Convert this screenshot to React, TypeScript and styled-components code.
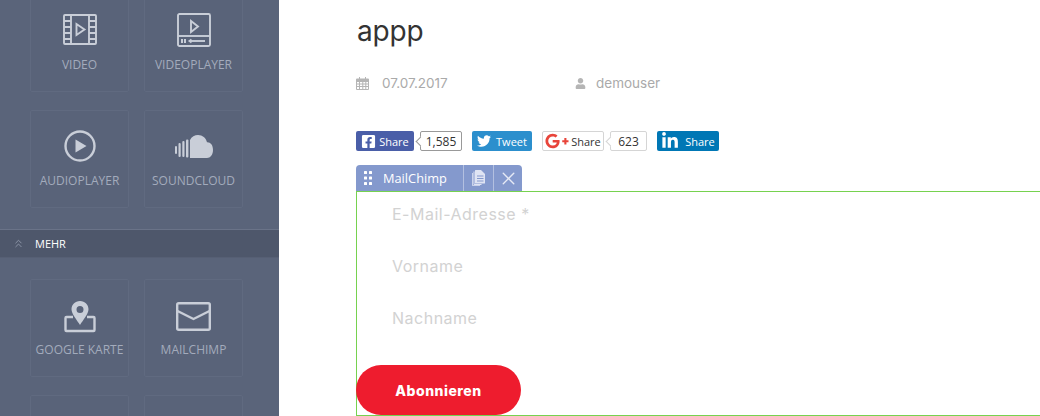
import React from 'react';
import styled, { createGlobalStyle } from 'styled-components';
import { FaFacebookSquare, FaTwitter, FaGooglePlusG, FaLinkedinIn, FaUser } from 'react-icons/fa';
import { X, ChevronsUp } from 'lucide-react';

const Global = createGlobalStyle`
  html, body { margin: 0; padding: 0; background: #fff; overflow: hidden; }
  * { box-sizing: border-box; }
`;

const Page = styled.div`
  width: 1040px;
  height: 416px;
  display: flex;
  overflow: hidden;
  font-family: "Open Sans", sans-serif;
`;

const Sidebar = styled.aside`
  width: 279px;
  flex: none;
  background: #5a647a;
  overflow: hidden;
`;

const TileGrid = styled.div<{ $top: number }>`
  display: grid;
  grid-template-columns: 99px 99px;
  column-gap: 15px;
  row-gap: 18px;
  padding-left: 30px;
  margin-top: ${p => p.$top}px;
`;

const Tile = styled.div`
  height: 98px;
  border: 1px solid #606a80;
  border-radius: 2px;
  background: #596379;
  display: flex;
  flex-direction: column;
  align-items: center;
  padding-top: 17px;
  color: #c9ced8;
`;

const IconSlot = styled.div<{ $nudge?: number }>`
  height: 36px;
  padding-top: ${p => p.$nudge ?? 0}px;
  display: flex;
  align-items: center;
  justify-content: center;
`;

const TileLabel = styled.div`
  margin-top: 9px;
  font-size: 12px;
  line-height: 16px;
  color: #a3abbc;
  white-space: nowrap;
`;

const Band = styled.div`
  height: 29px;
  margin-top: 21px;
  background: #4e576b;
  border-top: 1px solid #6a7388;
  border-bottom: 1px solid #565f74;
  display: flex;
  align-items: center;
  padding-left: 12px;
  gap: 10px;
  color: #98a0b2;
  font-size: 11px;
`;

const BandLabel = styled.span`
  color: #fff;
`;

const Main = styled.main`
  flex: 1;
  min-width: 0;
  padding-left: 77px;
  font-family: Inter, sans-serif;
`;

const Title = styled.h1`
  margin: 11px 0 0;
  padding-left: 1px;
  height: 40px;
  font-size: 28px;
  line-height: 40px;
  font-weight: 400;
  color: #333;
  letter-spacing: -0.2px;
`;

const Meta = styled.div`
  display: flex;
  margin-top: 22px;
  height: 20px;
  align-items: center;
  color: #aaa;
  font-size: 13.5px;
`;

const MetaItem = styled.div<{ $width: number; $gap: number }>`
  width: ${p => p.$width}px;
  display: flex;
  align-items: center;
  gap: ${p => p.$gap}px;
`;

const ShareRow = styled.div`
  display: flex;
  align-items: stretch;
  height: 20px;
  margin-top: 38px;
  font-family: "Open Sans", sans-serif;
  font-size: 11px;
`;

const ShareBtn = styled.div<{ $bg: string; $fg?: string; $width: number; $gap?: number; $inner?: number; $border?: string }>`
  width: ${p => p.$width}px;
  margin-right: ${p => p.$gap ?? 0}px;
  background: ${p => p.$bg};
  color: ${p => p.$fg ?? '#fff'};
  border: ${p => (p.$border ? `1px solid ${p.$border}` : 'none')};
  border-radius: 2px;
  display: flex;
  align-items: center;
  justify-content: center;
  gap: ${p => p.$inner ?? 5}px;
`;

const Count = styled.div<{ $width: number; $gap: number; $border: string }>`
  position: relative;
  width: ${p => p.$width}px;
  margin-left: 6px;
  margin-right: ${p => p.$gap}px;
  border: 1px solid ${p => p.$border};
  border-radius: 2px;
  display: flex;
  align-items: center;
  justify-content: center;
  color: #333;
  font-size: 12px;
  background: #fff;
  &::before {
    content: '';
    position: absolute;
    left: -4px;
    top: 6px;
    width: 6px;
    height: 6px;
    background: #fff;
    border-left: 1px solid ${p => p.$border};
    border-bottom: 1px solid ${p => p.$border};
    transform: rotate(45deg);
  }
`;

const Toolbar = styled.div`
  display: inline-flex;
  height: 26px;
  margin-top: 14px;
  background: #8499cd;
  border-radius: 4px 4px 0 0;
  color: #fff;
  font-family: "Open Sans", sans-serif;
  font-size: 12.8px;
  vertical-align: top;
`;

const ToolCell = styled.div<{ $width: number; $first?: boolean }>`
  width: ${p => p.$width}px;
  display: flex;
  align-items: center;
  justify-content: ${p => (p.$first ? 'flex-start' : 'center')};
  gap: 11px;
  padding-left: ${p => (p.$first ? 8 : 0)}px;
  border-left: ${p => (p.$first ? 'none' : '1px solid #b3c0e0')};
`;

const FormBox = styled.div`
  width: 900px;
  height: 225px;
  border: 1px solid #76d24f;
  display: flex;
  flex-direction: column;
`;

const Field = styled.div`
  height: 52px;
  padding-left: 35px;
  display: flex;
  align-items: center;
  color: #d2d2d2;
  font-size: 16px;
  letter-spacing: 0.5px;
  &:first-child { margin-top: -4px; }
`;

const Subscribe = styled.button`
  width: 165px;
  height: 50px;
  margin: 21px 0 0 -1px;
  border: none;
  border-radius: 25px;
  background: #ee1c2e;
  color: #fff;
  font-family: Inter, sans-serif;
  font-weight: 800;
  font-size: 14px;
  letter-spacing: 0.5px;
`;

const Icon = styled.svg.attrs({ fill: 'none', stroke: 'currentColor' })``;

const FilmIcon = () => (
  <Icon width="34" height="32" viewBox="0 0 34 32" strokeWidth="1.9">
    <rect x="1" y="1" width="32" height="29" rx="1" />
    <path d="M8 1v29M26 1v29M1 7h7M1 13h7M1 19h7M1 25h7M26 7h7M26 13h7M26 19h7M26 25h7" />
    <path d="M13.5 10v11l8-5.500z" />
  </Icon>
);

const PlayerIcon = () => (
  <Icon width="34" height="34" viewBox="0 0 34 34" strokeWidth="1.9">
    <rect x="1" y="1" width="32" height="32" rx="1.500" />
    <path d="M1 23h32" />
    <path d="M14 8v11l7-5.500z" />
    <path d="M13 28h15" />
    <path d="M14.500 26.500l-2 1.500 2 1.500" />
    <path d="M5 26v4M8 26v4" strokeWidth="2" />
  </Icon>
);

const PlayCircleIcon = () => (
  <svg width="32" height="32" viewBox="0 0 32 32">
    <circle cx="16" cy="16" r="14.500" fill="none" stroke="currentColor" strokeWidth="2.400" />
    <path d="M11.500 9.500v13l11-6.500z" fill="currentColor" />
  </svg>
);

const CloudIcon = () => (
  <svg width="38" height="23" viewBox="0 0 38 23" fill="currentColor">
    <rect x="0" y="11" width="2" height="8" rx="1" />
    <rect x="3.500" y="8" width="2.200" height="14" rx="1" />
    <rect x="7.300" y="6" width="2.200" height="16" rx="1" />
    <rect x="11" y="4.500" width="2.400" height="18" rx="1" />
    <path d="M15 23V5C16.500 1.800 19.800 0 23 0c4.500 0 8 3 9 7.300 3.300-.3 6 2.500 6 7.700 0 4.800-2.700 8-6 8z" />
  </svg>
);

const PinIcon = () => (
  <svg width="32" height="32" viewBox="0 0 32 32">
    <path d="M9 16H2.500a1 1 0 0 0-1 1v12a1 1 0 0 0 1 1h27a1 1 0 0 0 1-1V17a1 1 0 0 0-1-1H23" fill="none" stroke="currentColor" strokeWidth="2.400" />
    <path fillRule="evenodd" fill="currentColor" d="M16 0c5 0 8.500 3.800 8.500 8.300 0 4.500-5.500 11-8.500 15.700-3-4.700-8.500-11.200-8.500-15.700C7.500 3.800 11 0 16 0zm0 5a3.500 3.500 0 1 0 0 7 3.500 3.500 0 0 0 0-7z" />
  </svg>
);

const MailIcon = () => (
  <Icon width="35" height="29" viewBox="0 0 35 29" strokeWidth="2.400">
    <rect x="1.200" y="1.200" width="32.600" height="26.600" rx="1.500" />
    <path d="M1.500 9l16 8 16-8" />
  </Icon>
);

const CalendarIcon = () => (
  <svg width="13" height="13" viewBox="0 0 13 13" fill="#b5b5b5">
    <path fillRule="evenodd" d="M3 0h1v1.500h5V0h1v1.500h2a1 1 0 0 1 1 1V12a1 1 0 0 1-1 1H1a1 1 0 0 1-1-1V2.500a1 1 0 0 1 1-1h2zM1 5v1.500h2V5zm3 0v1.500h2.300V5zm3.300 0v1.500h2V5zm3 0v1.500H12V5zM1 7.500V9h2V7.500zm3 0V9h2.300V7.500zm3.300 0V9h2V7.500zm3 0V9H12V7.500zM1 10v2h2v-2zm3 0v2h2.300v-2zm3.300 0v2h2v-2zm3 0v2H12v-2z" />
  </svg>
);

const GripIcon = () => (
  <svg width="8" height="15" viewBox="0 0 8 15" fill="#fff">
    {[0, 5.5, 11].flatMap(y => [0, 5].map(x => <rect key={`${x}-${y}`} x={x} y={y} width="3" height="3" rx="0.600" />))}
  </svg>
);

const PagesIcon = () => (
  <svg width="13" height="16" viewBox="0 0 13 16" fill="#dfe4f3">
    <path d="M1.500 1.500h1V14h7v1h-7a1 1 0 0 1-1-1zM0 3h.8v12.200H8V16H1a1 1 0 0 1-1-1z" />
    <path fillRule="evenodd" d="M3.500 0h5.500l4 4v9a.5.500 0 0 1-.5.500h-9a.5.500 0 0 1-.5-.5V.5A.5.500 0 0 1 3.500 0zm1.500 5.500v1h6.500v-1zm0 2.500v1h6.500V8zm0 2.500v1h6.500v-1z" />
  </svg>
);

export default function App() {
  return (
    <Page>
      <Global />
      <Sidebar>
        <TileGrid $top={-6}>
          <Tile><IconSlot><FilmIcon /></IconSlot><TileLabel>VIDEO</TileLabel></Tile>
          <Tile><IconSlot><PlayerIcon /></IconSlot><TileLabel>VIDEOPLAYER</TileLabel></Tile>
          <Tile><IconSlot><PlayCircleIcon /></IconSlot><TileLabel>AUDIOPLAYER</TileLabel></Tile>
          <Tile><IconSlot><CloudIcon /></IconSlot><TileLabel>SOUNDCLOUD</TileLabel></Tile>
        </TileGrid>
        <Band>
          <ChevronsUp size={13} strokeWidth={1.5} />
          <BandLabel>MEHR</BandLabel>
        </Band>
        <TileGrid $top={21}>
          <Tile><IconSlot $nudge={3}><PinIcon /></IconSlot><TileLabel>GOOGLE KARTE</TileLabel></Tile>
          <Tile><IconSlot $nudge={3}><MailIcon /></IconSlot><TileLabel>MAILCHIMP</TileLabel></Tile>
          <Tile />
          <Tile />
        </TileGrid>
      </Sidebar>
      <Main>
        <Title>appp</Title>
        <Meta>
          <MetaItem $width={219} $gap={13}><CalendarIcon />07.07.2017</MetaItem>
          <MetaItem $width={120} $gap={10}><FaUser size={11} color="#b5b5b5" />demouser</MetaItem>
        </Meta>
        <ShareRow>
          <ShareBtn $bg="#4a5ea8" $width={58} $inner={3}><FaFacebookSquare size={15} />Share</ShareBtn>
          <Count $width={42} $gap={10} $border="#999">1,585</Count>
          <ShareBtn $bg="#2c8fcd" $width={60} $gap={10}><FaTwitter size={14} />Tweet</ShareBtn>
          <ShareBtn $bg="#fff" $fg="#333" $border="#d5d5d5" $width={62} $inner={2}>
            <FaGooglePlusG size={24} color="#e8443a" />Share
          </ShareBtn>
          <Count $width={37} $gap={10} $border="#d5d5d5">623</Count>
          <ShareBtn $bg="#0077b5" $width={62} $inner={6}><FaLinkedinIn size={18} />Share</ShareBtn>
        </ShareRow>
        <Toolbar>
          <ToolCell $first $width={107}><GripIcon />MailChimp</ToolCell>
          <ToolCell $width={30}><PagesIcon /></ToolCell>
          <ToolCell $width={29}><X size={21} strokeWidth={1.6} color="#e6eaf5" /></ToolCell>
        </Toolbar>
        <FormBox>
          <Field>E-Mail-Adresse *</Field>
          <Field>Vorname</Field>
          <Field>Nachname</Field>
          <Subscribe>Abonnieren</Subscribe>
        </FormBox>
      </Main>
    </Page>
  );
}
